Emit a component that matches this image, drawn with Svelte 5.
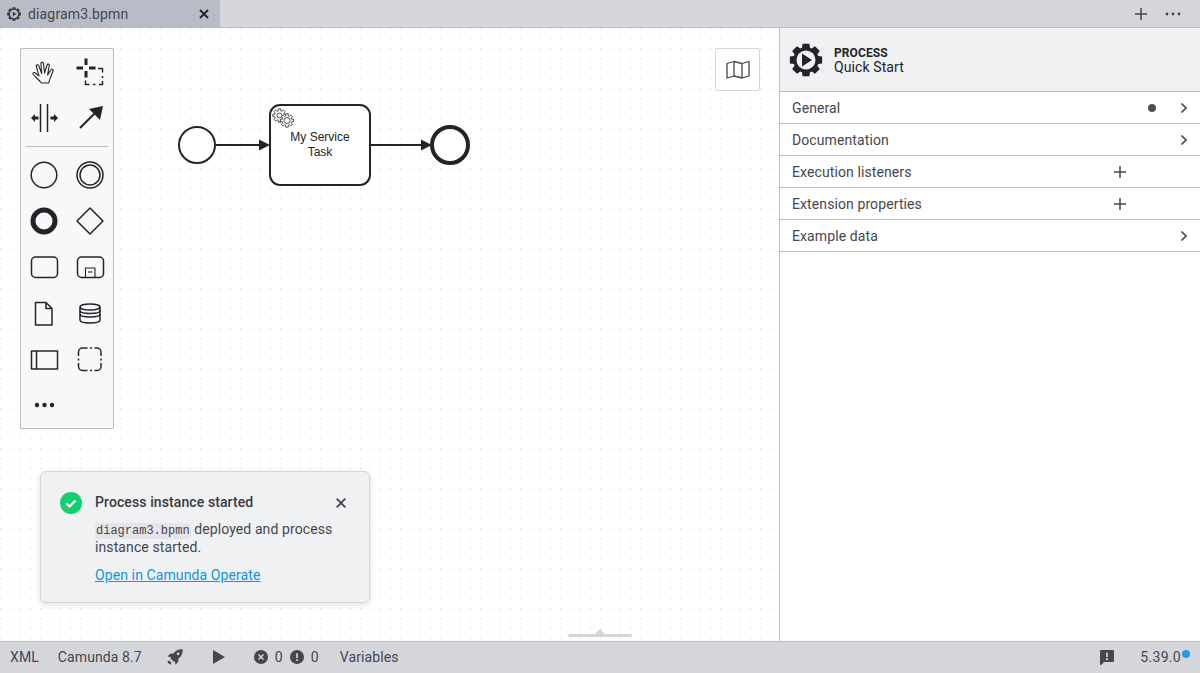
<script>
	const tools = ['hand', 'lasso', 'space', 'connect'];
	const shapes = ['start', 'intermediate', 'end', 'gateway', 'task', 'subprocess', 'data', 'store', 'pool', 'group'];
	const rows = [
		{ label: 'General', dot: true, icon: 'chevron' },
		{ label: 'Documentation', icon: 'chevron' },
		{ label: 'Execution listeners', icon: 'plus' },
		{ label: 'Extension properties', icon: 'plus' },
		{ label: 'Example data', icon: 'chevron' }
	];

	// gear outline with square teeth, used by the tab and process icons
	function gear(cx, cy, inner, outer, teeth = 8, width = 0.42) {
		let d = '';
		const step = (Math.PI * 2) / teeth;
		for (let i = 0; i < teeth; i++) {
			const a = i * step - Math.PI / 2;
			const pts = [
				[inner, a - width * 0.75],
				[outer, a - width * 0.5],
				[outer, a + width * 0.5],
				[inner, a + width * 0.75]
			];
			for (const [r, t] of pts) {
				d += `${d ? 'L' : 'M'}${(cx + r * Math.cos(t)).toFixed(2)} ${(cy + r * Math.sin(t)).toFixed(2)}`;
			}
		}
		return d + 'Z';
	}
</script>

{#snippet toolIcon(name)}
	<svg width="46" height="46" viewBox="0 0 46 46" class="tool">
		{#if name === 'hand'}
			<path d="M20.500 34c-2.500-3-6-6-8.300-8.500-1-1.300.6-2.500 1.800-1.700l4 3-2.700-9.300c-.5-1.700 1.700-2.400 2.400-.8l3 7.800-.8-10c-.1-1.700 2.300-1.800 2.500-.1l1.200 9.600 2.500-8c.5-1.600 2.500-1 2.200.6l-1.700 9.400 3.400-5.300c.9-1.300 2.700-.5 2.100 1-1.700 4-3.100 8.300-4.600 12.300z" class="line hair" />
		{:else if name === 'lasso'}
			<path d="M19 9.500v6.500M19 22v6.500M9.500 19h6.500M22 19h6.500" class="line heavy" />
			<path d="M31 19.500h4.500v4M35.500 27v2M35.500 32v3.500h-3.500M28.500 35.500h-2.500M22.500 35.500h-4v-4" class="line thin" />
		{:else if name === 'space'}
			<path d="M19.500 9v28M26.500 9v28" class="line thin" />
			<path d="M10 23l4-4v2.500h3.500v3h-3.500v2.500zM37 23l-4-4v2.500h-3.500v3h3.500v2.500z" class="solid" />
		{:else if name === 'connect'}
			<path d="M13 33l15-15" class="line wide" />
			<path d="M36 11l-3 14-11-11z" class="solid" />
		{/if}
	</svg>
{/snippet}

{#snippet shapeIcon(name)}
	<svg width="46" height="46" viewBox="0 0 46 46" class="tool">
		{#if name === 'start'}
			<circle cx="23" cy="23" r="12.800" class="line thin" />
		{:else if name === 'intermediate'}
			<circle cx="23" cy="23" r="13" class="line thin" />
			<circle cx="23" cy="23" r="10" class="line thin" />
		{:else if name === 'end'}
			<circle cx="23" cy="23" r="11" class="line" stroke-width="5" />
		{:else if name === 'gateway'}
			<path d="M23 10l13 13-13 13-13-13z" class="line thin" />
		{:else if name === 'task'}
			<rect x="10.500" y="13" width="26" height="20.500" rx="4" class="line thin" />
		{:else if name === 'subprocess'}
			<rect x="10.500" y="13" width="26" height="20.500" rx="4" class="line thin" />
			<rect x="18.500" y="24" width="9.500" height="9.500" class="line hair" />
			<path d="M21 28h4.500" class="line hair" />
		{:else if name === 'data'}
			<path d="M14.500 12.500h10.500l6 6v16.500H14.500zM25 12.500v6h6" class="line thin" />
		{:else if name === 'store'}
			<path d="M13 17v13c0 4 20 4 20 0V17" class="line thin" />
			<ellipse cx="23" cy="17" rx="10" ry="3" class="line thin" />
			<path d="M13 20.500c0 4 20 4 20 0M13 24c0 4 20 4 20 0" class="line thin" />
		{:else if name === 'pool'}
			<rect x="10.500" y="15" width="26" height="18" class="line thin" />
			<path d="M15.500 15v18" class="line thin" />
		{:else if name === 'group'}
			<path d="M11.500 20v-4a4 4 0 0 1 4-4h5M23 12h2M27.500 12h2.500a4 4 0 0 1 4 4v4M34 22.500v2M34 27v3.500a4 4 0 0 1-4 4h-2.500M25 34.500h-2M20.500 34.500h-5a4 4 0 0 1-4-4v-3.500M11.500 24.500v-2" class="line thin" />
		{/if}
	</svg>
{/snippet}

<div class="app">
	<header class="tabs">
		<div class="tab">
			<svg width="16" height="16" viewBox="0 0 16 16">
				<path d={gear(8, 8, 5.500, 7)} fill="#393a41" />
				<circle cx="8" cy="8" r="4.200" fill="#b9bcc6" />
				<path d="M6.800 5.800L10.300 8 6.800 10.200z" fill="#393a41" />
			</svg>
			<span class="tab-name">diagram3.bpmn</span>
			<svg class="tab-close" width="10" height="10" viewBox="0 0 10 10">
				<path d="M1 1l8 8M9 1l-8 8" stroke="#22242a" stroke-width="1.800" />
			</svg>
		</div>
		<div class="tab-actions">
			<svg width="14" height="14" viewBox="0 0 14 14">
				<path d="M7 1v12M1 7h12" stroke="#45464e" stroke-width="1.500" />
			</svg>
			<svg width="16" height="4" viewBox="0 0 16 4">
				<circle cx="2" cy="2" r="1.400" fill="#45464e" />
				<circle cx="8" cy="2" r="1.400" fill="#45464e" />
				<circle cx="14" cy="2" r="1.400" fill="#45464e" />
			</svg>
		</div>
	</header>

	<div class="main">
		<section class="canvas">
			<svg class="diagram" width="779" height="613" viewBox="0 28 779 613">
				<circle cx="197" cy="145" r="18" fill="#fff" stroke="#22242a" stroke-width="2" />
				<path d="M216 145h44M371 145h50" stroke="#22242a" stroke-width="2" fill="none" />
				<path d="M270 145l-11-5.500v11zM432 145l-11-5.500v11z" fill="#22242a" />
				<rect x="270" y="105" width="100" height="80" rx="10" fill="#fff" stroke="#22242a" stroke-width="2" />
				<g fill="#fff" stroke="#22242a" stroke-width="0.800">
					<path d={gear(279.500, 115.500, 4.800, 6.800, 8, 0.36)} />
					<circle cx="279.500" cy="115.500" r="2.500" />
					<path d={gear(287, 120.500, 4.800, 6.800, 8, 0.36)} />
					<circle cx="287" cy="120.500" r="3" />
				</g>
				<text x="320" y="141" class="label">My Service</text>
				<text x="320" y="156" class="label">Task</text>
				<circle cx="450" cy="145" r="18" fill="#fff" stroke="#22242a" stroke-width="4" />
			</svg>

			<div class="palette">
				<div class="palette-grid">
					{#each tools as t}
						{@render toolIcon(t)}
					{/each}
				</div>
				<hr />
				<div class="palette-grid">
					{#each shapes as s}
						{@render shapeIcon(s)}
					{/each}
					<svg width="46" height="46" viewBox="0 0 46 46">
						<circle cx="16" cy="23" r="2.200" fill="#22242a" />
						<circle cx="23.500" cy="23" r="2.200" fill="#22242a" />
						<circle cx="31" cy="23" r="2.200" fill="#22242a" />
					</svg>
				</div>
			</div>

			<button class="map-btn" aria-label="Open minimap">
				<svg width="24" height="20" viewBox="0 0 24 20">
					<path d="M1 3.500l7-2 8 2 7-2v14.500l-7 2-8-2-7 2zM8 1.500v14.500M16 3.500v14.500" fill="none" stroke="#45464e" stroke-width="1.300" stroke-linejoin="round" />
				</svg>
			</button>

			<div class="toast">
				<svg class="toast-check" width="22" height="22" viewBox="0 0 22 22">
					<circle cx="11" cy="11" r="11" fill="#10d070" />
					<path d="M6.500 11.500l3 3 6-6" fill="none" stroke="#fff" stroke-width="2.200" />
				</svg>
				<div class="toast-body">
					<div class="toast-title">Process instance started</div>
					<p><code>diagram3.bpmn</code> deployed and process instance started.</p>
					<a href="#operate">Open in Camunda Operate</a>
				</div>
				<svg class="toast-close" width="10" height="10" viewBox="0 0 10 10">
					<path d="M.7.7l8.600 8.600M9.300.7L.7 9.300" stroke="#45464e" stroke-width="1.800" />
				</svg>
			</div>

			<div class="fold"></div>
		</section>

		<aside class="panel">
			<div class="panel-head">
				<svg width="34" height="34" viewBox="0 0 34 34">
					<path d={gear(17, 17, 12.800, 16.500)} fill="#22242a" />
					<circle cx="17" cy="17" r="9.500" fill="#f0f1f3" />
					<path d="M13 10.500L23 17 13 23.500z" fill="#22242a" />
				</svg>
				<div class="panel-title">
					<div class="kind">PROCESS</div>
					<div class="name">Quick Start</div>
				</div>
			</div>
			{#each rows as row}
				<div class="row">
					<span class="row-label">{row.label}</span>
					{#if row.dot}<span class="dot"></span>{/if}
					{#if row.icon === 'chevron'}
						<svg class="chevron" width="10" height="12" viewBox="0 0 10 12">
							<path d="M2.500 1.500L7 6l-4.500 4.500" fill="none" stroke="#45464e" stroke-width="1.700" />
						</svg>
					{:else}
						<svg class="plus" width="14" height="14" viewBox="0 0 14 14">
							<path d="M7 1v12M1 7h12" stroke="#45464e" stroke-width="1.500" />
						</svg>
					{/if}
				</div>
			{/each}
		</aside>
	</div>

	<footer class="status">
		<span>XML</span>
		<span class="engine">Camunda 8.7</span>
		<svg class="rocket" width="18" height="18" viewBox="0 0 20 20">
			<path d="M18.500 1.500c-4.500-.3-8 1.400-10.400 4.600L4.500 6.500 1.800 9.500l3.600.6-.6 1.200 3.900 3.900 1.200-.6.6 3.600 3-2.700.4-3.600c3.200-2.400 4.900-5.900 4.600-10.400z" fill="#45464e" />
			<circle cx="13.500" cy="6.500" r="1.500" fill="#d5d6dc" />
			<path d="M1.500 15l2-1 2.500 2.500-1 2-1.500-1-1-.5z" fill="#45464e" />
		</svg>
		<svg class="run" width="12" height="14" viewBox="0 0 12 14">
			<path d="M0 0l12 7-12 7z" fill="#45464e" />
		</svg>
		<span class="counts">
			<svg width="14" height="14" viewBox="0 0 14 14">
				<circle cx="7" cy="7" r="7" fill="#45464e" />
				<path d="M4.500 4.500l5 5M9.500 4.500l-5 5" stroke="#d5d6dc" stroke-width="1.500" />
			</svg>
			<span>0</span>
			<svg width="14" height="14" viewBox="0 0 14 14">
				<circle cx="7" cy="7" r="7" fill="#45464e" />
				<path d="M7 3.200v4.800M7 9.300v1.600" stroke="#d5d6dc" stroke-width="1.700" />
			</svg>
			<span>0</span>
		</span>
		<span class="variables">Variables</span>
		<svg class="feedback" width="14" height="16" viewBox="0 0 14 16">
			<path d="M1 1h12a1 1 0 0 1 1 1v10a1 1 0 0 1-1 1H4l-3 3H0V2a1 1 0 0 1 1-1z" fill="#45464e" />
			<path d="M7 3.500v4.500M7 9v2" stroke="#d5d6dc" stroke-width="1.700" />
		</svg>
		<span class="version">5.39.0<i></i></span>
	</footer>
</div>

<style>
	:global(body) {
		margin: 0;
	}

	.app {
		width: 1200px;
		height: 673px;
		display: flex;
		flex-direction: column;
		overflow: hidden;
		font-family: Roboto, 'Liberation Sans', sans-serif;
		font-size: 14px;
		letter-spacing: 0.1px;
		color: #45464e;
	}

	.tabs {
		height: 27px;
		flex: none;
		display: flex;
		justify-content: space-between;
		background: #d5d6dc;
		border-bottom: 1px solid #b9bcc6;
	}

	.tab {
		width: 220px;
		box-sizing: border-box;
		padding: 0 11px 0 6px;
		display: flex;
		align-items: center;
		gap: 6px;
		background: #b9bcc6;
	}

	.tab-name {
		flex: 1;
		letter-spacing: 0.15px;
	}

	.tab-actions {
		display: flex;
		align-items: center;
		gap: 17px;
		padding-right: 19px;
	}

	.main {
		flex: 1;
		min-height: 0;
		display: flex;
	}

	.canvas {
		position: relative;
		flex: 1;
		background-color: #fff;
		background-image: radial-gradient(circle at 0.5px 0.5px, #d5d6dc 0.6px, transparent 0.9px);
		background-size: 10px 10px;
	}

	.diagram {
		position: absolute;
		inset: 0;
	}

	.label {
		font-family: 'Liberation Sans', Arial, sans-serif;
		font-size: 12px;
		letter-spacing: 0;
		text-anchor: middle;
		fill: #22242a;
	}

	.palette {
		position: absolute;
		left: 20px;
		top: 20px;
		width: 92px;
		background: #f8f8f8;
		border: 1px solid #b9bcc6;
		border-radius: 2px;
	}

	.palette-grid {
		display: grid;
		grid-template-columns: 46px 46px;
		grid-auto-rows: 46px;
	}

	.palette hr {
		margin: 5px 5px;
		border: 0;
		border-top: 1px solid #b9bcc6;
	}

	.line {
		fill: none;
		stroke: #22242a;
		stroke-linejoin: round;
	}

	.thin {
		stroke-width: 1.500;
	}

	.hair {
		stroke-width: 1.100;
	}

	.heavy {
		stroke-width: 3;
	}

	.wide {
		stroke-width: 2;
	}

	.solid {
		fill: #22242a;
	}

	.map-btn {
		position: absolute;
		left: 715px;
		top: 20px;
		width: 45px;
		height: 43px;
		padding: 0;
		display: flex;
		align-items: center;
		justify-content: center;
		background: #fff;
		border: 1px solid #d5d6dc;
		border-radius: 2px;
	}

	.toast {
		position: absolute;
		left: 40px;
		top: 443px;
		width: 330px;
		height: 132px;
		box-sizing: border-box;
		padding: 20px 19px;
		display: flex;
		background: #f0f1f3;
		border: 1px solid #d5d6dc;
		border-radius: 6px;
		box-shadow: 0 2px 6px rgba(0, 0, 0, 0.12);
	}

	.toast-check {
		flex: none;
		margin-right: 13px;
	}

	.toast-body {
		flex: 1;
		line-height: 18px;
	}

	.toast-title {
		font-weight: 500;
		color: #393a41;
		margin: 1px 0 9px;
	}

	.toast-body p {
		margin: 0 0 10px;
	}

	.toast-body code {
		font-family: 'Liberation Mono', monospace;
		font-size: 12px;
		line-height: 1;
		letter-spacing: 0;
		color: #45464e;
		background: #e5e5e9;
		border-radius: 2px;
		padding: 1px;
	}

	.toast-body a {
		color: #0d93ea;
	}

	.toast-close {
		flex: none;
		margin: 6px 4px 0 0;
	}

	.fold {
		position: absolute;
		left: 568px;
		bottom: 4px;
		width: 64px;
		height: 3px;
		border-radius: 2px;
		background: #d5d6dc;
	}

	.fold::before {
		content: '';
		position: absolute;
		left: 26px;
		bottom: 2px;
		border: 6px solid transparent;
		border-top: 0;
		border-bottom-color: #d5d6dc;
	}

	.panel {
		width: 421px;
		flex: none;
		box-sizing: border-box;
		background: #fff;
		border-left: 1px solid #b9bcc6;
	}

	.panel-head {
		height: 64px;
		box-sizing: border-box;
		padding: 0 9px;
		display: flex;
		align-items: center;
		gap: 11px;
		background: #f0f1f3;
		border-bottom: 1px solid #b9bcc6;
	}

	.panel-title {
		line-height: 14px;
	}

	.kind {
		font-size: 12px;
		font-weight: 700;
		color: #22242a;
	}

	.name {
		color: #22242a;
	}

	.row {
		height: 32px;
		box-sizing: border-box;
		padding: 0 12px;
		display: flex;
		align-items: center;
		border-bottom: 1px solid #b9bcc6;
	}

	.row-label {
		flex: 1;
	}

	.dot {
		width: 8px;
		height: 8px;
		border-radius: 50%;
		background: #4d4f5c;
		margin-right: 23px;
	}

	.chevron {
		margin-right: -1px;
	}

	.plus {
		margin-right: 61px;
	}

	.status {
		height: 32px;
		flex: none;
		box-sizing: border-box;
		padding: 0 10px 1px;
		display: flex;
		align-items: center;
		background: #d5d6dc;
		border-top: 1px solid #b9bcc6;
	}

	.engine {
		margin-left: 19px;
	}

	.rocket {
		margin-left: 24px;
	}

	.run {
		margin-left: 29px;
	}

	.counts {
		margin-left: 29px;
		display: flex;
		align-items: center;
		gap: 7px;
	}

	.variables {
		margin-left: 21px;
		flex: 1;
	}

	.version {
		margin-left: 26px;
		margin-right: 9px;
		position: relative;
		letter-spacing: 0.3px;
	}

	.version i {
		position: absolute;
		right: -9px;
		top: 1px;
		width: 8px;
		height: 8px;
		border-radius: 50%;
		background: #1e9bf0;
	}
</style>
